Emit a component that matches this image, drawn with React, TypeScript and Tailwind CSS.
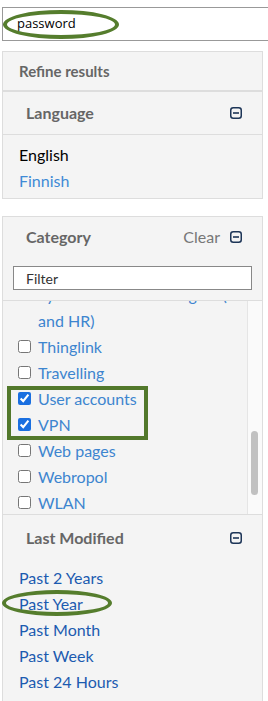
import React from "react";

function MinusBox() {
  return (
    <svg width="12" height="12" viewBox="0 0 12 12" className="shrink-0">
      <rect x="0.75" y="0.75" width="10.5" height="10.5" rx="2.5" fill="none" stroke="#1d3557" strokeWidth="1.5" />
      <line x1="3" y1="6" x2="9" y2="6" stroke="#1d3557" strokeWidth="1.6" />
    </svg>
  );
}

function SectionHeader({ title, clear }: { title: string; clear?: boolean }) {
  return (
    <div className="flex items-center justify-between pl-[23px] pr-[20px] h-[40px]">
      <span className="text-[16px] font-bold text-[#666]">{title}</span>
      <div className="flex items-center gap-[10px]">
        {clear && <span className="text-[16px] text-[#777]">Clear</span>}
        <MinusBox />
      </div>
    </div>
  );
}

const categories = [
  { label: ["Systems and access rights (IMI", "and HR)"], checked: false },
  { label: ["Thinglink"], checked: false },
  { label: ["Travelling"], checked: false },
  { label: ["User accounts"], checked: true },
  { label: ["VPN"], checked: true },
  { label: ["Web pages"], checked: false },
  { label: ["Webropol"], checked: false },
  { label: ["WLAN"], checked: false },
];

const periods = ["Past 2 Years", "Past Year", "Past Month", "Past Week", "Past 24 Hours"];

export default function App() {
  return (
    <div className="relative w-[268px] h-[701px] overflow-hidden bg-white font-['Lato',sans-serif]">
      {/* search box */}
      <div className="relative mt-[7px] ml-[2px] w-[300px] h-[34px] border border-[#999] flex items-center pl-[14px]">
        <span className="text-[13px] text-black font-['Open_Sans',sans-serif]">password</span>
        <div className="absolute left-[0px] top-[2px] w-[116px] h-[29px] rounded-[50%] border-[4px] border-[#557d2d]" />
      </div>

      {/* refine panel */}
      <div className="mt-[10px] ml-[2px] w-[261px] border border-[#ddd] bg-[#f4f4f4]">
        <div className="h-[40px] flex items-center pl-[16px] border-b-2 border-[#ddd]">
          <span className="text-[15px] font-bold text-[#666]">Refine results</span>
        </div>
        <div className="border-b border-[#ddd] pt-[1px] pb-[1px]">
          <SectionHeader title="Language" />
        </div>
        <div className="pl-[16px] pt-[7px] pb-[4px] text-[16px] leading-[26px]">
          <div className="text-black">English</div>
          <div className="text-[#3f8ad6]">Finnish</div>
        </div>
      </div>

      {/* category panel */}
      <div className="mt-[17px] ml-[2px] w-[261px] border border-[#ddd] bg-[#f4f4f4]">
        <SectionHeader title="Category" clear />
        <div className="px-[10px] pt-[9px] pb-[10px]">
          <div className="h-[24px] border border-[#888] bg-white flex items-center pl-[12px]">
            <span className="text-[14px] text-[#333]">Filter</span>
          </div>
        </div>
        <div className="flex h-[215px] border-t border-b border-[#ddd]">
          <div className="flex-1 overflow-hidden relative">
            <div className="-mt-[19px]">
              {categories.map((c) => (
                <label key={c.label[0]} className="flex items-start gap-[7px] pl-[15px] pr-[4px] text-[16px] leading-[26px] text-[#3d85cf]">
                  <input
                    type="checkbox"
                    checked={c.checked}
                    readOnly
                    className="mt-[6px] w-[13px] h-[13px] shrink-0 accent-[#1a6fe0]"
                  />
                  <span className="whitespace-nowrap">
                    {c.label.map((l) => (
                      <span key={l} className="block">{l}</span>
                    ))}
                  </span>
                </label>
              ))}
            </div>
            <div className="absolute left-[4px] top-[85px] w-[141px] h-[54px] border-[4px] border-[#52782b]" />
          </div>
          <div className="w-[15px] border-l border-[#e5e5e5] bg-[#fafafa] relative">
            <div className="absolute left-[3px] top-[130px] w-[7px] h-[64px] rounded-full bg-[#c1c1c1]" />
          </div>
        </div>
        <div className="pt-[3px]">
          <SectionHeader title="Last Modified" />
        </div>
        <div className="relative pl-[16px] pt-[7px] pb-[6px] text-[16px] leading-[26px] text-[#1c5bb0]">
          {periods.map((p) => (
            <div key={p}>{p}</div>
          ))}
          <div className="absolute left-[-1px] top-[32px] w-[110px] h-[26px] rounded-[50%] border-[4px] border-[#557d2d]" />
        </div>
      </div>
    </div>
  );
}
